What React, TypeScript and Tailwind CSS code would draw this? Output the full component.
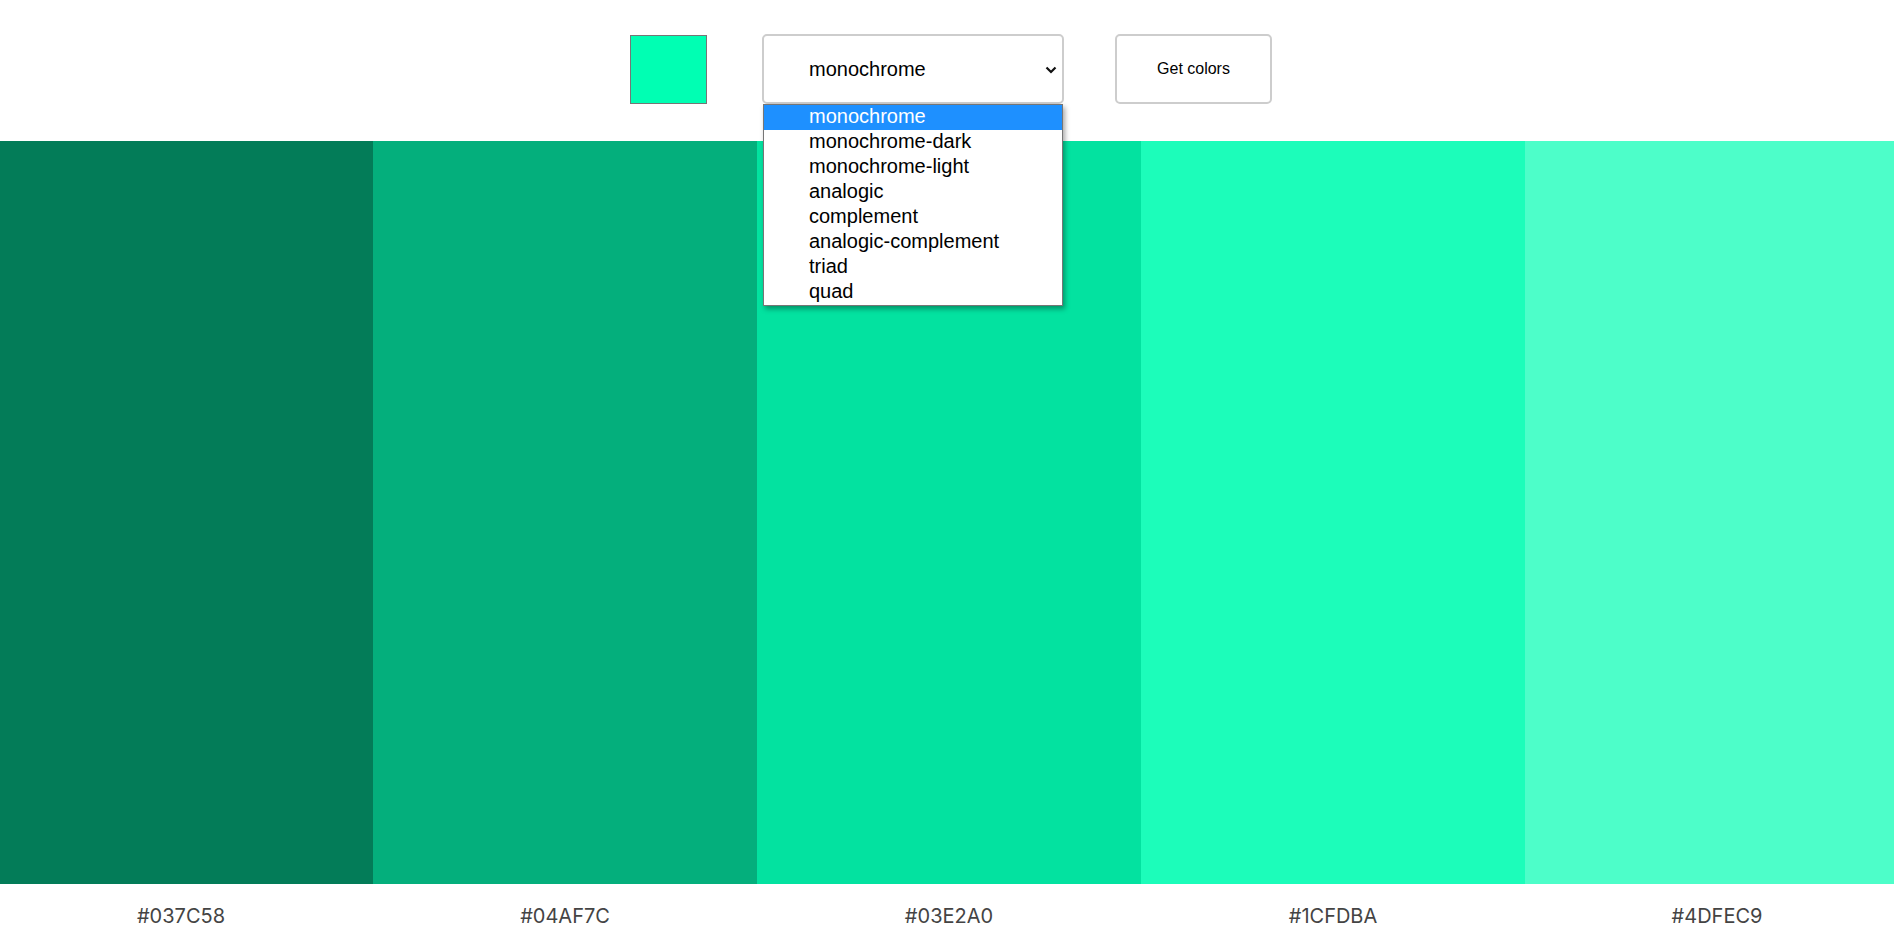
import React from "react";

const colors = [
  { hex: "#037C58", bg: "bg-[#037C58]" },
  { hex: "#04AF7C", bg: "bg-[#04AF7C]" },
  { hex: "#03E2A0", bg: "bg-[#03E2A0]" },
  { hex: "#1CFDBA", bg: "bg-[#1CFDBA]" },
  { hex: "#4DFEC9", bg: "bg-[#4DFEC9]" },
];

const options = [
  "monochrome",
  "monochrome-dark",
  "monochrome-light",
  "analogic",
  "complement",
  "analogic-complement",
  "triad",
  "quad",
];

export default function App() {
  return (
    <div className="w-[1894px] h-[943px] bg-white overflow-hidden flex flex-col font-['Liberation_Sans',Arial,sans-serif]">
      <header className="h-[141px] shrink-0 flex justify-center items-start pt-[34px] pl-[8px]">
        <div className="mt-[1px] w-[77px] h-[69px] border border-[#767676] bg-[#00FFB3]" />
        <div className="relative ml-[55px] w-[302px] h-[70px]">
          <div className="w-full h-full rounded-[5px] border-2 border-[#cdcdcd] bg-white flex items-center pl-[45px] pr-[5px]">
            <span className="flex-1 text-[20px] text-black leading-none">monochrome</span>
            <svg width="12" height="8" viewBox="0 0 12 8" className="mt-[2px]">
              <path d="M1.5 1.5 L6 6 L10.5 1.5" fill="none" stroke="#111" strokeWidth="2.2" />
            </svg>
          </div>
          <div className="absolute left-[1px] top-[70px] w-[300px] h-[202px] z-10 bg-white border border-[#767676] shadow-[2px_3px_5px_rgba(0,0,0,0.35)] flex flex-col">
            {options.map((o, i) => (
              <div
                key={o}
                className={
                  i === 0
                    ? "h-[25px] shrink-0 flex items-center pl-[45px] pb-[4px] text-[20px] leading-none bg-[#1E90FF] text-white"
                    : "h-[25px] shrink-0 flex items-center pl-[45px] pb-[4px] text-[20px] leading-none text-black"
                }
              >
                {o}
              </div>
            ))}
          </div>
        </div>
        <button className="ml-[51px] w-[157px] h-[70px] rounded-[5px] border-2 border-[#cdcdcd] bg-white text-[16px] text-black flex items-center justify-center">
          Get colors
        </button>
      </header>
      <main className="flex-1 flex -ml-[11px] w-[1920px] shrink-0">
        {colors.map((c) => (
          <div key={c.hex} className="w-[384px] shrink-0 flex flex-col">
            <div className={`${c.bg} h-[743px] shrink-0`} />
            <div className="flex-1 flex justify-center pt-[22px] text-[20px] leading-none text-[#444] font-['Inter',sans-serif]">
              {c.hex}
            </div>
          </div>
        ))}
      </main>
    </div>
  );
}
